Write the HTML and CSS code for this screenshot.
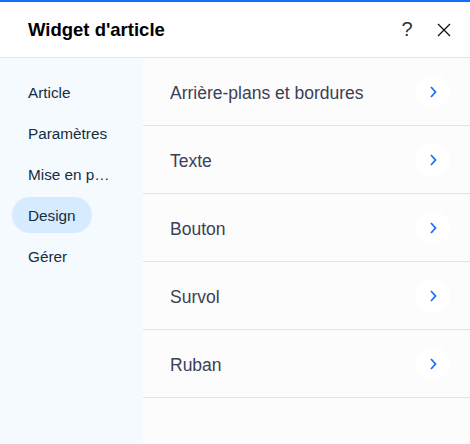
FILE: index.html
```html
<!DOCTYPE html>
<html lang="fr">
<head>
<meta charset="utf-8">
<title>Widget d'article</title>
<link rel="stylesheet" href="styles.css">
</head>
<body>
<div class="panel">
  <header class="header">
    <h1 class="title">Widget d'article</h1>
    <div class="actions">
      <button class="icon-btn help" aria-label="Aide">?</button>
      <button class="icon-btn" aria-label="Fermer">
        <svg width="14" height="14" viewBox="0 0 14 14"><path d="M1 1L13 13M13 1L1 13" stroke="#111" stroke-width="1.3" fill="none"/></svg>
      </button>
    </div>
  </header>
  <div class="body">
    <nav class="sidebar">
      <div class="nav-item">Article</div>
      <div class="nav-item">Paramètres</div>
      <div class="nav-item">Mise en p…</div>
      <div class="nav-item active">Design</div>
      <div class="nav-item">Gérer</div>
    </nav>
    <div class="content">
      <div class="row"><span class="label">Arrière-plans et bordures</span><span class="chev"><svg width="8" height="14" viewBox="0 0 8 14"><path d="M2 2L6.5 7L2 12" stroke="#116dff" stroke-width="1.7" fill="none"/></svg></span></div>
      <div class="row"><span class="label">Texte</span><span class="chev"><svg width="8" height="14" viewBox="0 0 8 14"><path d="M2 2L6.5 7L2 12" stroke="#116dff" stroke-width="1.7" fill="none"/></svg></span></div>
      <div class="row"><span class="label">Bouton</span><span class="chev"><svg width="8" height="14" viewBox="0 0 8 14"><path d="M2 2L6.5 7L2 12" stroke="#116dff" stroke-width="1.7" fill="none"/></svg></span></div>
      <div class="row"><span class="label">Survol</span><span class="chev"><svg width="8" height="14" viewBox="0 0 8 14"><path d="M2 2L6.5 7L2 12" stroke="#116dff" stroke-width="1.7" fill="none"/></svg></span></div>
      <div class="row"><span class="label">Ruban</span><span class="chev"><svg width="8" height="14" viewBox="0 0 8 14"><path d="M2 2L6.5 7L2 12" stroke="#116dff" stroke-width="1.7" fill="none"/></svg></span></div>
    </div>
  </div>
</div>
</body>
</html>
```
FILE: styles.css
```css
* { box-sizing: border-box; }
html, body { margin: 0; padding: 0; }
body {
  font-family: "Liberation Sans", Arial, sans-serif;
  background: #fff;
  width: 470px;
  height: 444px;
  overflow: hidden;
}
.panel {
  display: flex;
  flex-direction: column;
  height: 444px;
  border-top: 2px solid #116dff;
}
.header {
  height: 56px;
  flex: none;
  display: flex;
  align-items: center;
  justify-content: space-between;
  padding: 0 15px 0 28px;
  border-bottom: 1px solid #dfe5eb;
  background: #fff;
}
.title {
  margin: 0;
  font-size: 18.5px;
  font-weight: bold;
  color: #000;
}
.actions {
  display: flex;
  align-items: center;
  gap: 15px;
}
.icon-btn {
  border: none;
  background: none;
  padding: 0;
  width: 22px;
  height: 22px;
  display: flex;
  align-items: center;
  justify-content: center;
  font-family: "Liberation Sans", Arial, sans-serif;
  font-size: 20px;
  color: #333;
}
.help {
  font-weight: 300;
}
.body {
  flex: 1;
  display: flex;
}
.sidebar {
  width: 143px;
  flex: none;
  background: #f5faff;
  padding: 16px 0 0 12px;
  display: flex;
  flex-direction: column;
  gap: 5px;
}
.nav-item {
  height: 36px;
  display: flex;
  align-items: center;
  align-self: flex-start;
  padding: 2px 16px 0;
  border-radius: 18px;
  font-size: 15.3px;
  color: #162d3d;
}
.nav-item.active {
  background: #d6ebff;
}
.content {
  flex: 1;
  background: #fcfcfc;
}
.row {
  height: 68px;
  display: flex;
  align-items: center;
  justify-content: space-between;
  padding: 0 20px 0 27px;
  border-bottom: 1px solid #dfe5eb;
}
.label {
  font-size: 17.5px;
  color: #3b4057;
  padding-top: 3px;
}
.chev {
  width: 34px;
  height: 34px;
  border-radius: 50%;
  background: #fff;
  display: flex;
  align-items: center;
  justify-content: center;
}
```
